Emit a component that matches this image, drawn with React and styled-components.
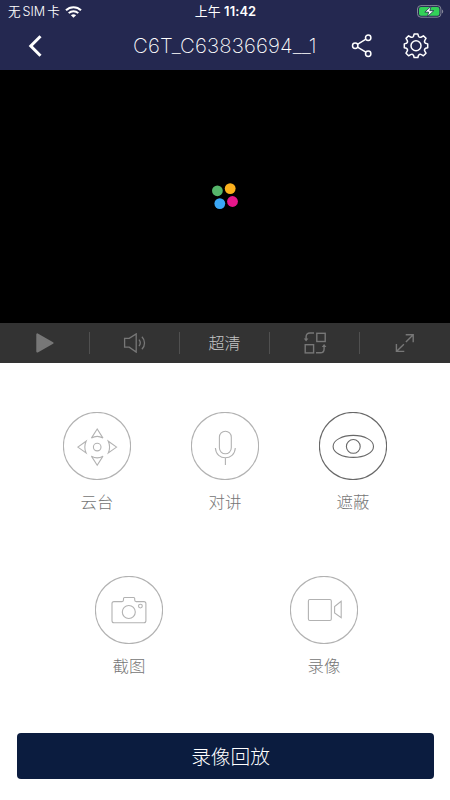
import React, { useState } from 'react';
import styled, { createGlobalStyle } from 'styled-components';

const GlobalStyle = createGlobalStyle`
  * {
    box-sizing: border-box;
  }

  body {
    margin: 0;
    background: #fff;
    font-family: Inter, 'Noto Sans CJK SC', sans-serif;
  }

  button {
    padding: 0;
    border: 0;
    background: none;
    font: inherit;
    color: inherit;
  }

  svg {
    display: block;
    fill: none;
    stroke: currentColor;
    flex-shrink: 0;
  }
`

const Screen = styled.div`
  width: 450px;
  height: 800px;
  display: flex;
  flex-direction: column;
  overflow: hidden;
  background: #fff;
`

const Header = styled.header`
  height: 70px;
  background: #242850;
  color: #fff;
`

const StatusBar = styled.div`
  height: 23px;
  padding: 0 6px 0 8px;
  display: grid;
  grid-template-columns: 1fr auto 1fr;
  align-items: center;
  white-space: nowrap;
`

const Carrier = styled.div`
  display: flex;
  align-items: center;
  gap: 2px;
  font-size: 12.6px;
  line-height: 20px;
  font-weight: 350;

  svg {
    margin-left: 3px;
  }
`

const Clock = styled.div`
  margin-right: 1px;
  font-size: 12.9px;
  line-height: 20px;
  font-weight: 600;
  letter-spacing: 0.1px;

  span {
    font-weight: 400;
  }
`

const Battery = styled.div`
  justify-self: end;
`

const NavBar = styled.nav`
  height: 47px;
  padding: 0 21px 2px 23px;
  display: flex;
  align-items: center;
`

const Title = styled.h1`
  flex: 1;
  margin: 0;
  padding-left: 86px;
  font-size: 20.4px;
  line-height: 28px;
  font-weight: 200;
  letter-spacing: 0.15px;
  white-space: nowrap;
`

const NavActions = styled.div`
  display: flex;
  gap: 29px;
`

const Player = styled.section`
  height: 253px;
  display: flex;
  align-items: center;
  justify-content: center;
  background: #000;
`

const Toolbar = styled.div`
  height: 40px;
  display: flex;
  align-items: center;
  background: #333;
`

const Tool = styled.button`
  width: 90px;
  height: 22px;
  display: flex;
  align-items: center;
  justify-content: center;
  border-right: ${props => (props.$last ? '0' : '1px solid #505050')};
  color: ${props => props.$color || '#777'};
  font-size: 16px;
  line-height: 22px;
  font-weight: 300;
`

const Controls = styled.main`
  height: 370px;
  padding-top: 49px;
`

const ControlRow = styled.div`
  display: flex;
  justify-content: center;
  gap: ${props => props.$gap}px;
  padding-left: ${props => props.$shift || 0}px;
  height: 164px;
`

const Control = styled.button`
  width: 68px;
  display: flex;
  flex-direction: column;
  align-items: center;
  align-self: flex-start;
  color: ${props => (props.$active ? '#686868' : '#b2b2b2')};
`

const Label = styled.span`
  margin-top: 10px;
  color: #757575;
  font-size: 16.4px;
  line-height: 24px;
  font-weight: 300;
`

const PlaybackButton = styled.button`
  height: 46px;
  margin: 0 16.5px;
  padding: 2px 0 0 11px;
  border-radius: 4px;
  background: #0b1c3f;
  color: #fff;
  font-size: 19.7px;
  line-height: 44px;
  font-weight: 300;
`

const WifiIcon = () => (
  <svg width="17" height="12" viewBox="0 0 17 12" strokeWidth="2">
    <path d="M1 4.3C5.1.1 11.9.1 16 4.3" />
    <path d="M3.7 7.1c2.7-2.6 6.9-2.6 9.6 0" />
    <path d="M8.5 11.8 5.9 9.2c1.5-1.3 3.7-1.3 5.2 0z" fill="currentColor" stroke="none" />
  </svg>
)

const BatteryIcon = () => (
  <svg width="27" height="13" viewBox="0 0 27 13">
    <rect x=".5" y=".6" width="23.4" height="11.6" rx="3.4" stroke="#858799" />
    <rect x="2" y="2.1" width="20.4" height="8.6" rx="2" fill="#32d158" stroke="none" />
    <path d="M25 4.5c1.6.5 1.6 3.4 0 4z" fill="#858799" stroke="none" />
    <path d="m14.1 1.3-6.3 5.8h3.9l-1.3 4.5 6.4-5.9h-4z" fill="#fff" stroke="#242850" strokeWidth=".8" />
  </svg>
)

const BackIcon = () => (
  <svg width="24" height="24" viewBox="0 0 24 24" strokeWidth="3">
    <path d="M17.5 2.3 7.8 12l9.7 9.7" />
  </svg>
)

const ShareIcon = () => (
  <svg width="24" height="26" viewBox="0 0 24 26" strokeWidth="1.5">
    <circle cx="5.2" cy="12.7" r="2.7" />
    <circle cx="18.2" cy="4.7" r="2.7" />
    <circle cx="18.2" cy="20.7" r="2.7" />
    <path d="m7.5 11.3 8.4-5.1M7.5 14.1l8.4 5.1" />
  </svg>
)

const GearIcon = () => (
  <svg width="26" height="26" viewBox="0 .5 26 26" strokeWidth="1.5" strokeLinejoin="round">
    <circle cx="13" cy="13.3" r="5" />
    <path d="M11.1 1.6h3.8l.6 2.2q1.1 1.6 2.9.7l2-1.2 2.6 2.6-1.2 2q-.9 1.8.7 2.9l2.2.6v3.8l-2.2.6q-1.6 1.1-.7 2.9l1.2 2-2.6 2.6-2-1.2q-1.8-.9-2.9.7l-.6 2.2h-3.8l-.6-2.2q-1.1-1.6-2.9-.7l-2 1.2L3 20.7l1.2-2q.9-1.8-.7-2.9l-2.2-.6v-3.8l2.2-.6q1.6-1.1.7-2.9L3 5.9l2.6-2.6 2 1.2q1.8.9 2.9-.7z" />
  </svg>
)

const Loader = () => (
  <svg width="28" height="28" viewBox="0 0 28 28">
    <g stroke="none">
      <circle cx="6.4" cy="7.8" r="5.4" fill="#55b56a" />
      <circle cx="19.2" cy="5.6" r="5.4" fill="#fbb01d" />
      <circle cx="8.8" cy="20.6" r="5.4" fill="#3ba7f6" />
      <circle cx="21.5" cy="18.5" r="5.4" fill="#e6168b" />
    </g>
  </svg>
)

const PlayIcon = () => (
  <svg width="18" height="20" viewBox="0 0 18 20">
    <path d="M1.3 1.4v17.2L16.6 10z" fill="currentColor" strokeWidth="2" strokeLinejoin="round" />
  </svg>
)

const SpeakerIcon = () => (
  <svg width="23" height="20" viewBox="-.8 0 23 20" strokeWidth="1.3">
    <path d="M.8 5.4h4.6L12.4.9v18.2l-7-4.9H.8z" />
    <path d="M15.2 6.6c1.5 1.8 1.5 4.6 0 6.6M18.1 3.7c3.5 3.5 3.5 9 0 12.5" />
  </svg>
)

const SwapIcon = () => (
  <svg width="24" height="22" viewBox="0 0 24 22" strokeWidth="1.4">
    <rect x="13.8" y="1.3" width="8.4" height="8.2" />
    <rect x="2.2" y="12.7" width="8.4" height="8.2" />
    <path d="M11 1H7Q3.1 1 3.1 4.8V8M13 20.8h4.3q3.8 0 3.8-3.8v-3.2" />
    <path d="M.8 6.6h4.6L3.1 9.4zM18.8 14.9h4.6l-2.3-2.8z" fill="currentColor" stroke="none" />
  </svg>
)

const ExpandIcon = () => (
  <svg width="20" height="20" viewBox="0 0 20 20" strokeWidth="1.4">
    <path d="M10.7 1.8h7.5v7.5M18.2 1.8 10.9 9M1.4 11v7.4h7.9M1.4 18.4l7.5-7.2" />
  </svg>
)

// every round control draws its own ring, icons share the 68px box
const Ring = ({ children }) => (
  <svg width="68" height="68" viewBox="0 0 68 68" strokeWidth="1.1">
    <circle cx="34" cy="34" r="33.6" />
    {children}
  </svg>
)

const PtzIcon = () => (
  <Ring>
    <circle cx="34.2" cy="35.1" r="3.8" />
    <path d="m34.2 17-5.8 9.1q5.8-3.5 11.6 0z" />
    <path d="m34.2 53.2-5.8-9.1q5.8 3.5 11.6 0z" />
    <path d="m14.8 35.1 8.3-5.9q-2.6 5.9 0 11.8z" />
    <path d="m53.6 35.1-8.3-5.9q2.6 5.9 0 11.8z" />
  </Ring>
)

const MicIcon = () => (
  <Ring>
    <rect x="28.4" y="19.2" width="11.9" height="22.6" rx="5.95" />
    <path d="M24.4 36c.6 13 19.3 13 19.9 0M34.4 45.8V53" />
  </Ring>
)

const EyeIcon = () => (
  <Ring>
    <ellipse cx="34.3" cy="34.4" rx="20.2" ry="11" />
    <circle cx="34.3" cy="34.4" r="6.9" />
  </Ring>
)

const CameraIcon = () => (
  <Ring>
    <path d="M19 25.6h8q1.5 0 1.5-1.5v-1.6q0-1 1-1h9.2q1 0 1 1v1.6q0 1.5 1.5 1.5h7.7q2 0 2 2v17.2q0 2-2 2H19q-2 0-2-2V27.6q0-2 2-2z" />
    <circle cx="33.8" cy="36" r="6.5" />
    <circle cx="45.4" cy="30.1" r="1.9" />
  </Ring>
)

const RecordIcon = () => (
  <Ring>
    <rect x="18.4" y="23.5" width="22.9" height="21" rx="1.4" />
    <path d="m51.2 25.3-6.6 5.2v6.4l6.6 4.8z" />
  </Ring>
)

const mainControls = [
  { id: 'ptz', label: '云台', Icon: PtzIcon },
  { id: 'talk', label: '对讲', Icon: MicIcon },
  { id: 'cover', label: '遮蔽', Icon: EyeIcon }
]

const captureControls = [
  { id: 'shot', label: '截图', Icon: CameraIcon },
  { id: 'record', label: '录像', Icon: RecordIcon }
]

const App = () => {
  const [active, setActive] = useState('cover');

  const renderControl = ({ id, label, Icon }) => (
    <Control key={id} $active={active === id} onClick={() => setActive(id)}>
      <Icon />
      <Label>{label}</Label>
    </Control>
  )

  return (
    <Screen>
      <GlobalStyle />
      <Header>
        <StatusBar>
          <Carrier>
            <span>无</span>
            <span>SIM</span>
            <span>卡</span>
            <WifiIcon />
          </Carrier>
          <Clock><span>上午</span> 11:42</Clock>
          <Battery><BatteryIcon /></Battery>
        </StatusBar>
        <NavBar>
          <button aria-label="back"><BackIcon /></button>
          <Title>C6T_C63836694__1</Title>
          <NavActions>
            <button aria-label="share"><ShareIcon /></button>
            <button aria-label="settings"><GearIcon /></button>
          </NavActions>
        </NavBar>
      </Header>

      <Player>
        <Loader />
      </Player>

      <Toolbar>
        <Tool><PlayIcon /></Tool>
        <Tool><SpeakerIcon /></Tool>
        <Tool $color="#c4c4c4">超清</Tool>
        <Tool><SwapIcon /></Tool>
        <Tool $last><ExpandIcon /></Tool>
      </Toolbar>

      <Controls>
        <ControlRow $gap={60}>{mainControls.map(renderControl)}</ControlRow>
        <ControlRow $gap={127} $shift={3}>{captureControls.map(renderControl)}</ControlRow>
      </Controls>

      <PlaybackButton>录像回放</PlaybackButton>
    </Screen>
  )
}

export default App;
